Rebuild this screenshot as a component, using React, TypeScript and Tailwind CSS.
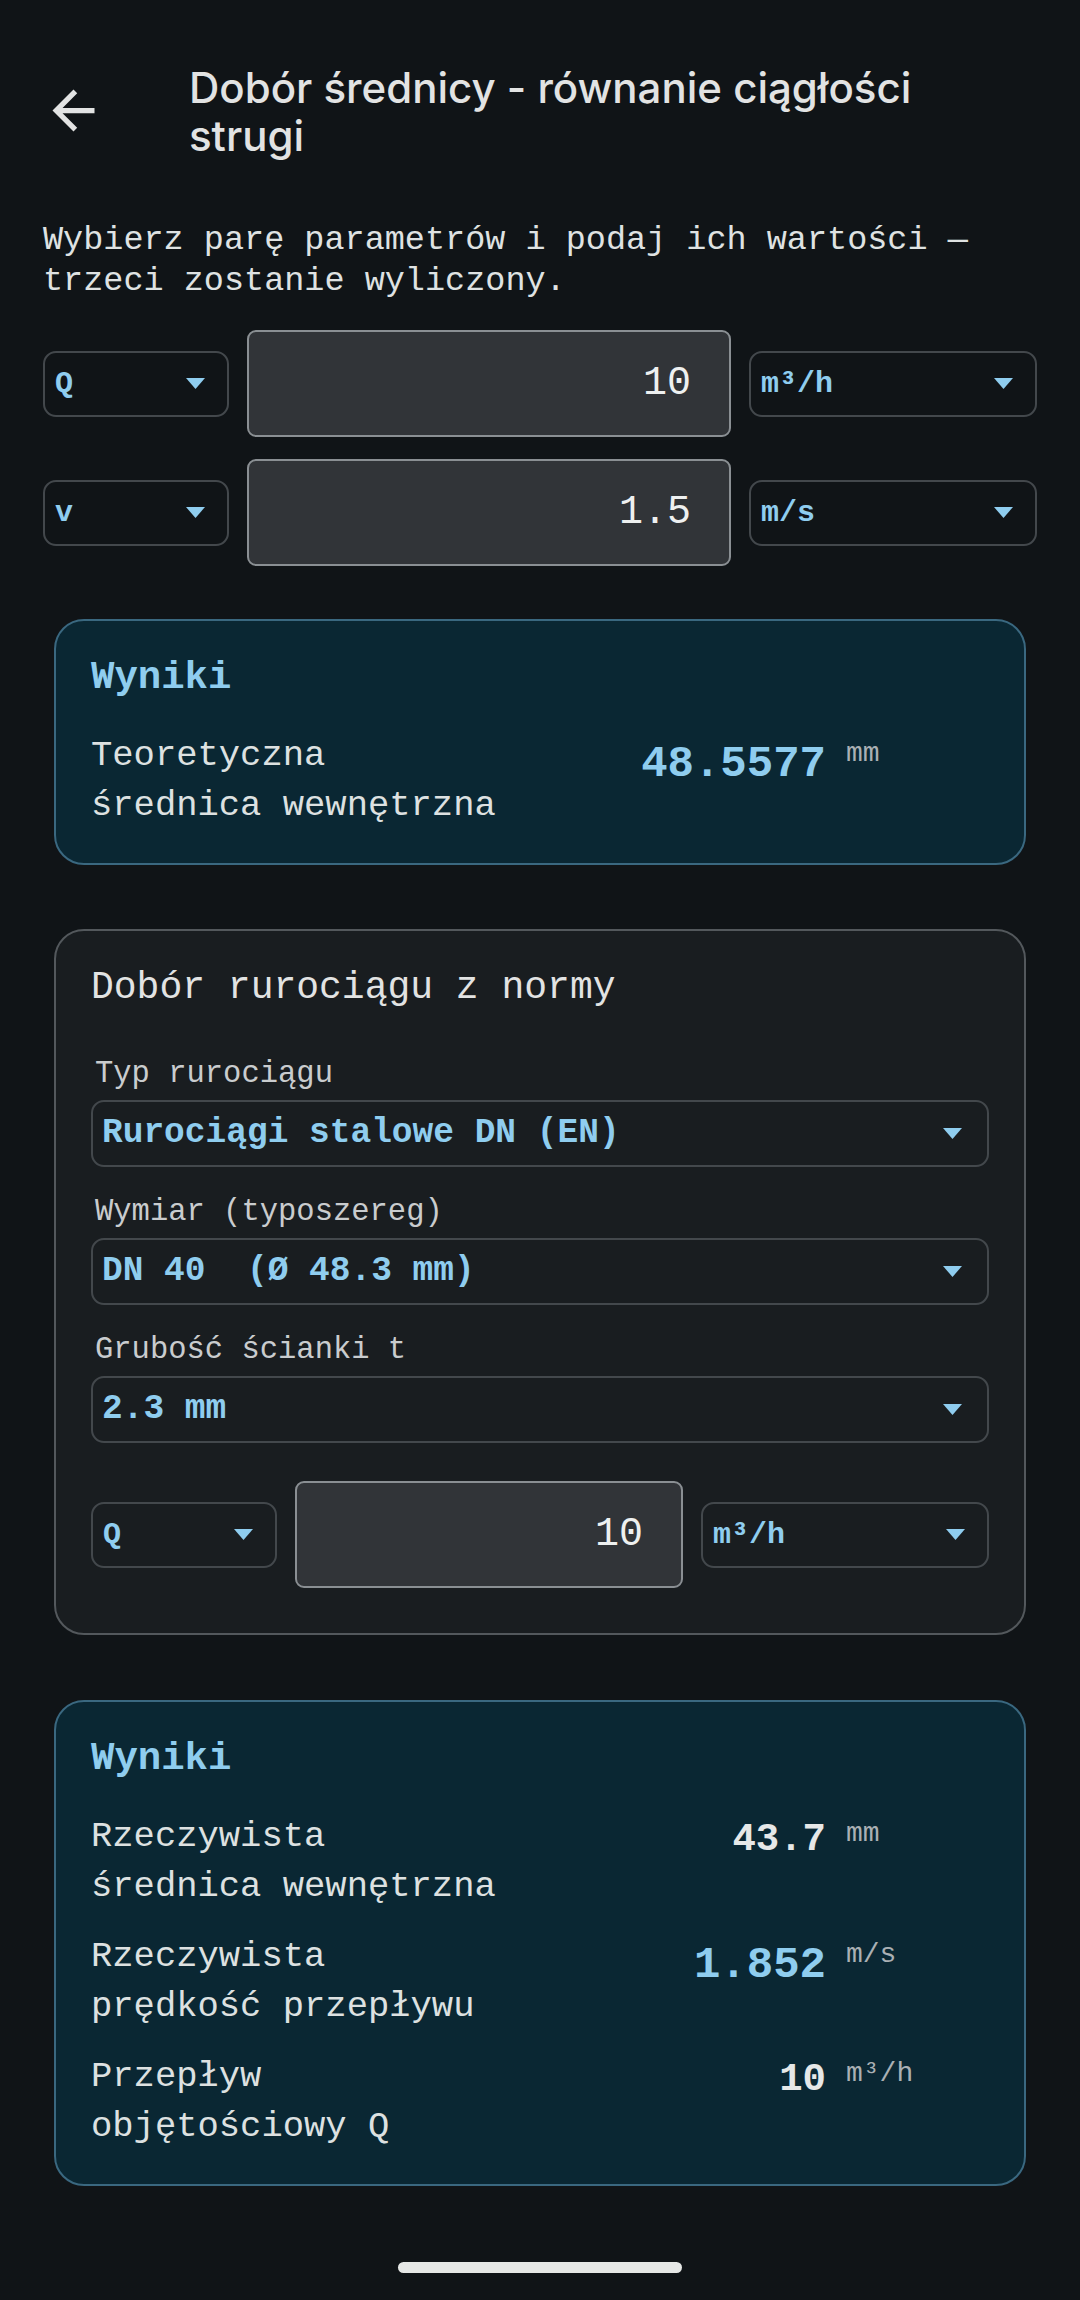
import React from 'react';

// Dobór średnicy — continuity equation pipe sizing screen

const Caret = () => (
  <svg width="19" height="11" viewBox="0 0 19 11" className="shrink-0" aria-hidden="true">
    <path d="M0 0h19L9.5 11z" fill="#8fcdef" />
  </svg>
);

const Chip: React.FC<{ label: string; className: string }> = ({ label, className }) => (
  <div
    className={`flex h-[66px] shrink-0 items-center justify-between rounded-[13px] border-2 border-[#43484c] pl-[10px] pr-[22px] ${className}`}
  >
    <span className="text-[30px] font-bold leading-none text-[#8fcdef]">{label}</span>
    <Caret />
  </div>
);

const ValueInput: React.FC<{ value: string }> = ({ value }) => (
  <div className="flex h-[107px] flex-1 items-center justify-end rounded-[9px] border-2 border-[#8a8f93] bg-[#313438] pr-[38px] text-[40px] leading-none text-[#eef0f0]">
    {value}
  </div>
);

const ParamRow: React.FC<{ param: string; value: string; unit: string }> = ({ param, value, unit }) => (
  <div className="flex items-center gap-[18px]">
    <Chip label={param} className="w-[186px]" />
    <ValueInput value={value} />
    <Chip label={unit} className="w-[288px]" />
  </div>
);

const Select: React.FC<{ label: string; value: string }> = ({ label, value }) => (
  <div className="flex flex-col">
    <span className="pl-[4px] text-[30.5px] leading-[36px] text-[#c9ccce]">{label}</span>
    <div className="mt-[8px] flex h-[67px] items-center justify-between rounded-[13px] border-2 border-[#43484c] pl-[9px] pr-[25px]">
      <span className="whitespace-pre text-[34.5px] font-bold leading-none text-[#8fcdef]">{value}</span>
      <Caret />
    </div>
  </div>
);

type Result = { label: string; value: string; unit: string; accent?: boolean };

const ResultRow: React.FC<Result> = ({ label, value, unit, accent }) => (
  <div className="flex items-start">
    <div className="w-[412px] text-[35.5px] leading-[50px] text-[#dde1e1]">{label}</div>
    {accent ? (
      <div className="mt-[8px] flex flex-1 justify-end text-[44px] font-bold leading-[50px] text-[#8fcdef]">{value}</div>
    ) : (
      <div className="mt-[3px] flex flex-1 justify-end text-[39px] font-bold leading-[50px] text-[#e6e8e8]">{value}</div>
    )}
    <div className={`w-[163px] pl-[20px] text-[28px] leading-[32px] text-[#aab0b4] ${accent ? 'mt-[7px]' : 'mt-[6px]'}`}>
      {unit}
    </div>
  </div>
);

const ResultsCard: React.FC<{ rows: Result[]; className: string }> = ({ rows, className }) => (
  <section className={`mx-[54px] rounded-[30px] border-2 border-[#3a6880] bg-[#0a2733] px-[35px] pt-[34px] pb-[32px] ${className}`}>
    <h2 className="text-[39px] font-bold leading-[46px] text-[#8fcdef]">Wyniki</h2>
    <div className="mt-[30px] flex flex-col gap-[20px]">
      {rows.map((row) => (
        <ResultRow key={row.label} {...row} />
      ))}
    </div>
  </section>
);

export default function App() {
  return (
    <div className="flex min-h-[2300px] flex-col bg-[#101417] font-['Liberation_Mono',monospace] text-[#e2e3e3]">
      {/* Top bar */}
      <header className="flex items-start pl-[42px] pt-[64px]">
        <svg className="mt-[15px] h-[63px] w-[63px] shrink-0" viewBox="0 0 24 24" aria-hidden="true">
          <path fill="#e2e3e3" d="M20 11H7.83l5.59-5.59L12 4l-8 8 8 8 1.41-1.41L7.83 13H20v-2z" />
        </svg>
        <h1 className="ml-[84px] w-[790px] font-['Inter',sans-serif] text-[42px] font-medium leading-[48px] text-[#e2e3e3]">
          Dobór średnicy - równanie ciągłości strugi
        </h1>
      </header>

      <p className="mt-[60px] px-[43px] text-[33.5px] leading-[41px] text-[#dfe2e2]">
        Wybierz parę parametrów i podaj ich wartości — trzeci zostanie wyliczony.
      </p>

      <div className="mt-[28px] flex flex-col gap-[22px] px-[43px]">
        <ParamRow param="Q" value="10" unit="m³/h" />
        <ParamRow param="v" value="1.5" unit="m/s" />
      </div>

      <ResultsCard
        className="mt-[53px]"
        rows={[{ label: 'Teoretyczna średnica wewnętrzna', value: '48.5577', unit: 'mm', accent: true }]}
      />

      {/* Standard pipe selection */}
      <section className="mx-[54px] mt-[64px] rounded-[30px] border-2 border-[#53585c] bg-[#191d20] px-[35px] pt-[34px] pb-[45px]">
        <h2 className="text-[38px] leading-[46px] text-[#e2e3e3]">Dobór rurociągu z normy</h2>
        <div className="mt-[45px] flex flex-col gap-[27px]">
          <Select label="Typ rurociągu" value="Rurociągi stalowe DN (EN)" />
          <Select label="Wymiar (typoszereg)" value="DN 40  (Ø 48.3 mm)" />
          <Select label="Grubość ścianki t" value="2.3 mm" />
        </div>
        <div className="mt-[38px]">
          <ParamRow param="Q" value="10" unit="m³/h" />
        </div>
      </section>

      <ResultsCard
        className="mt-[65px]"
        rows={[
          { label: 'Rzeczywista średnica wewnętrzna', value: '43.7', unit: 'mm' },
          { label: 'Rzeczywista prędkość przepływu', value: '1.852', unit: 'm/s', accent: true },
          { label: 'Przepływ objętościowy Q', value: '10', unit: 'm³/h' },
        ]}
      />

      {/* Gesture bar */}
      <div className="mt-[76px] flex justify-center">
        <div className="h-[11px] w-[284px] rounded-full bg-[#e6e8e6]" />
      </div>
    </div>
  );
}
